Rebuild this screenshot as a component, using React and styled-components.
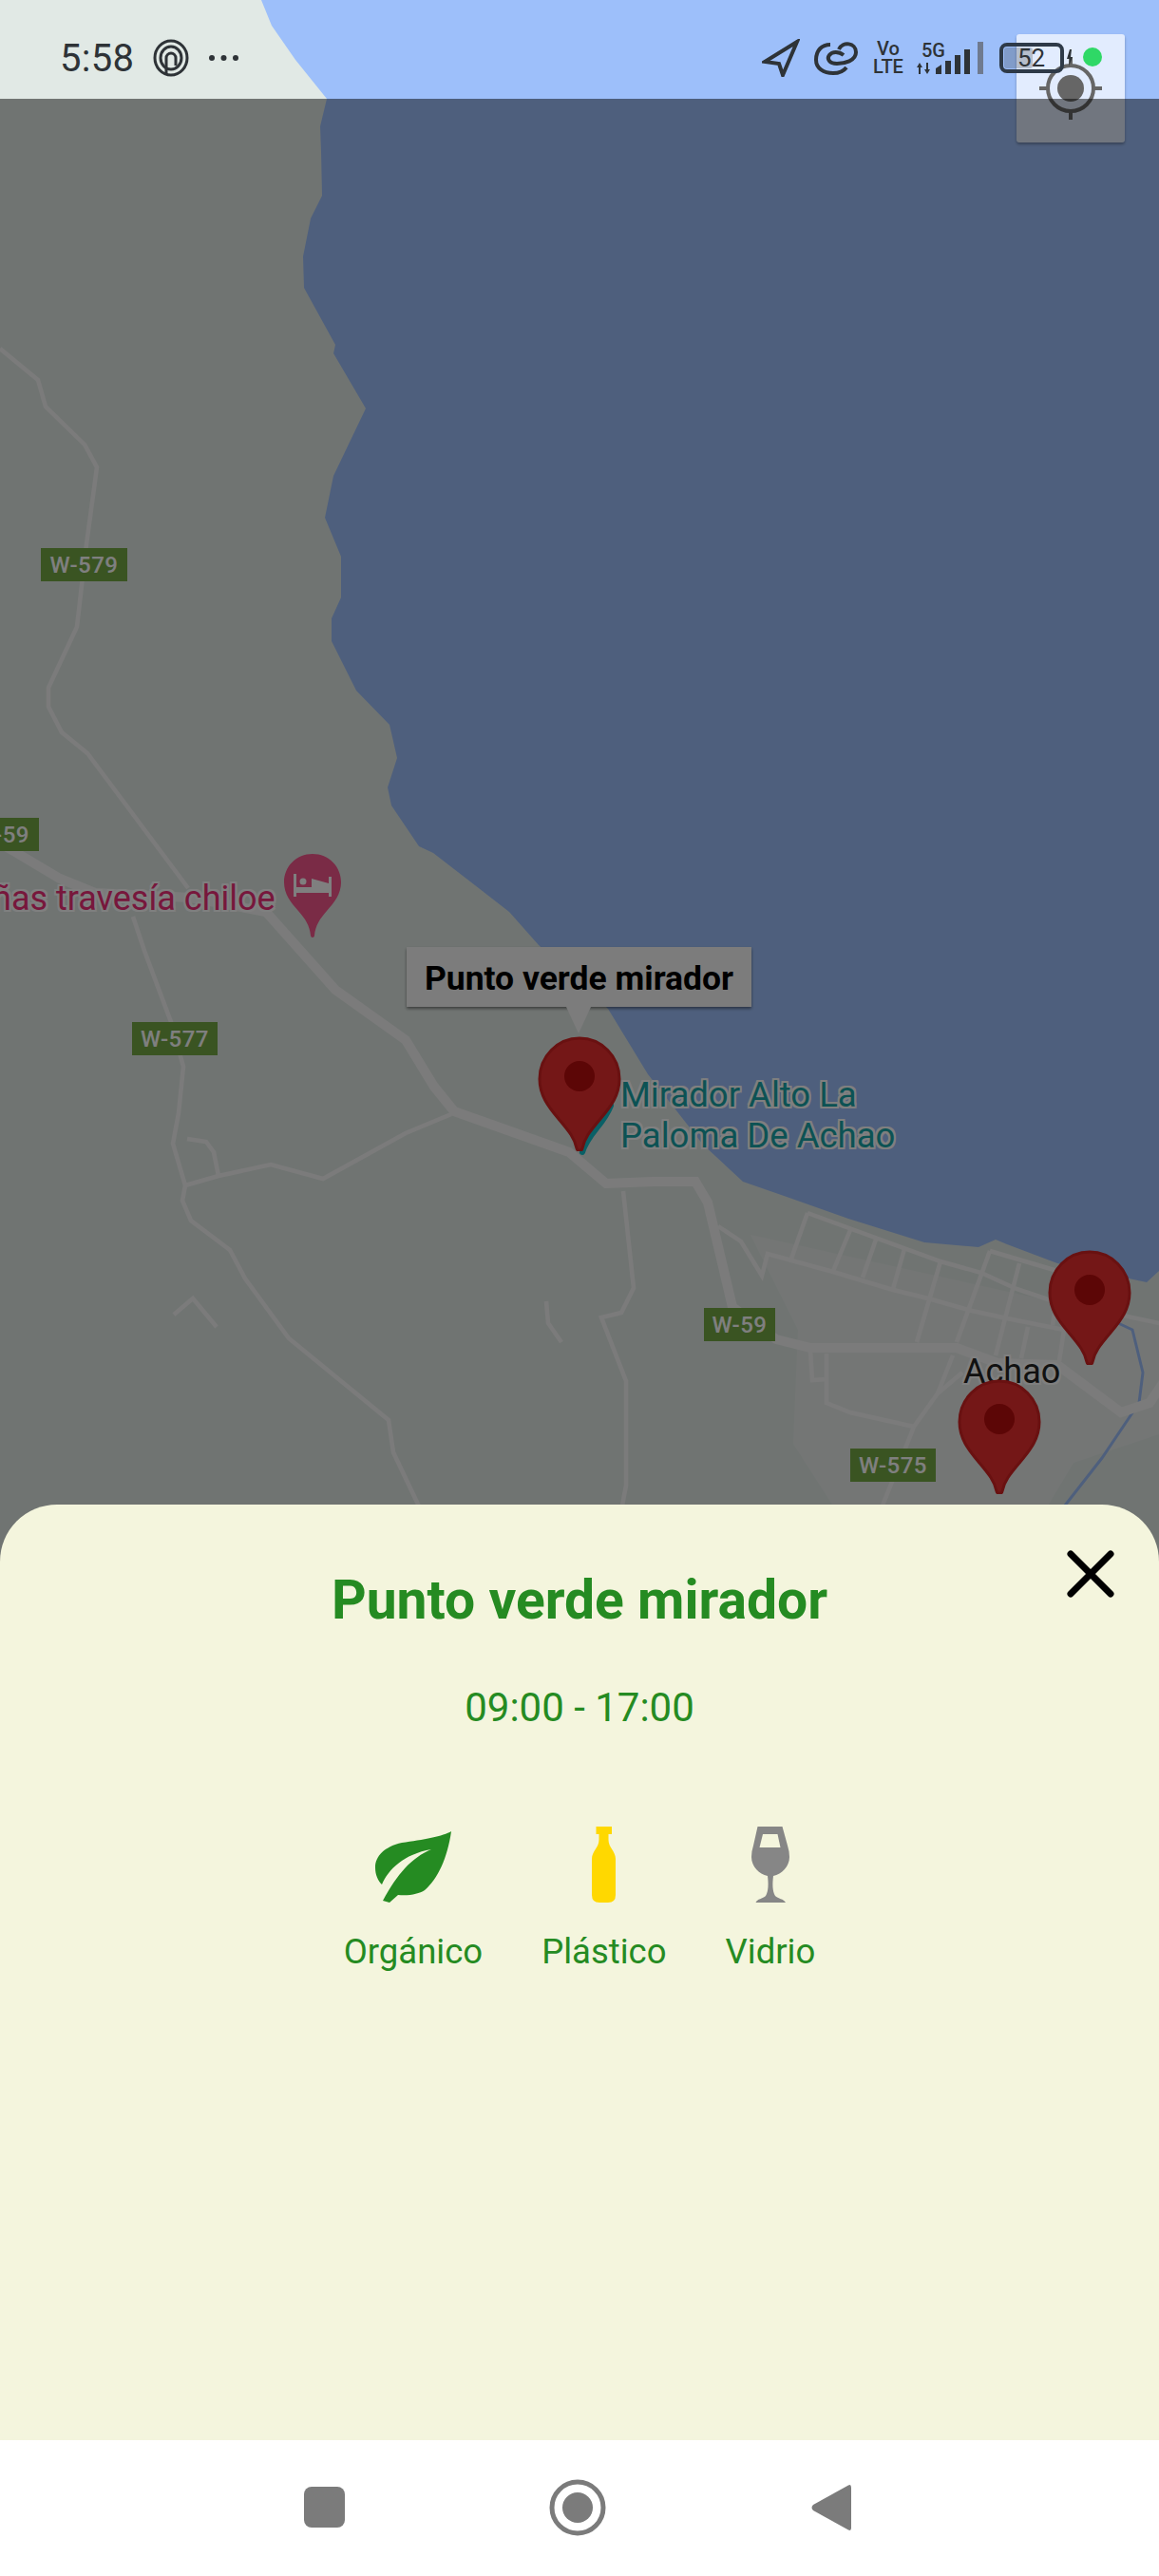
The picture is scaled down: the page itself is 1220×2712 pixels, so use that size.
import React from 'react'
import styled, { createGlobalStyle } from 'styled-components'

const GlobalStyle = createGlobalStyle`
  html, body {
    margin: 0;
    padding: 0;
    background: #fff;
    font-family: Roboto, "Liberation Sans", sans-serif;
  }
`

const Phone = styled.div`
  width: 1220px;
  height: 2712px;
  display: flex;
  flex-direction: column;
  overflow: hidden;
  position: relative;
`

const MapArea = styled.div`
  position: relative;
  height: 1644px;
  margin-bottom: -60px;
  flex: none;
  overflow: hidden;
  background: #e1e9e5;
`

const MapLayer = styled.svg`
  position: absolute;
  left: 0;
  top: 0;
`

const Scrim = styled.div`
  position: absolute;
  left: 0;
  right: 0;
  top: 104px;
  bottom: 0;
  background: rgba(0, 0, 0, 0.5);
`

const RoadSign = styled.span`
  position: absolute;
  left: ${p => p.$x}px;
  top: ${p => p.$y}px;
  width: ${p => p.$w}px;
  height: 35px;
  background: #74a845;
  color: #fff;
  font-size: 24px;
  font-weight: 500;
  letter-spacing: 0.5px;
  white-space: nowrap;
  display: flex;
  align-items: center;
  justify-content: ${p => p.$end ? 'flex-end' : 'center'};
  padding-right: ${p => p.$end ? 10 : 0}px;
  box-sizing: border-box;
  overflow: hidden;
`

const PlaceLabel = styled.span`
  position: absolute;
  left: ${p => p.$x}px;
  top: ${p => p.$y}px;
  color: ${p => p.$color};
  font-size: ${p => p.$size}px;
  line-height: ${p => p.$line}px;
  white-space: pre;
  text-shadow: -2px 0 #fff, 2px 0 #fff, 0 -2px #fff, 0 2px #fff,
    -2px -2px #fff, 2px -2px #fff, -2px 2px #fff, 2px 2px #fff;
`

const PinMark = styled.svg`
  position: absolute;
  left: ${p => p.$x}px;
  top: ${p => p.$y}px;
`

const Tooltip = styled.div`
  position: absolute;
  left: 428px;
  top: 997px;
  width: 363px;
  height: 63px;
  padding-top: 2px;
  box-sizing: border-box;
  background: #f8f8f8;
  box-shadow: 0 2px 3px rgba(0, 0, 0, 0.45);
  color: #000;
  font-size: 35.5px;
  font-weight: 700;
  display: flex;
  align-items: center;
  justify-content: center;
  white-space: nowrap;

  &::after {
    content: '';
    position: absolute;
    left: 168px;
    top: 63px;
    border-left: 13px solid transparent;
    border-right: 13px solid transparent;
    border-top: 28px solid #f8f8f8;
  }
`

const LocateButton = styled.div`
  position: absolute;
  left: 1070px;
  top: 36px;
  width: 114px;
  height: 114px;
  border-radius: 3px;
  background: rgba(255, 255, 255, 0.7);
  box-shadow: 0 2px 3px rgba(0, 0, 0, 0.3);
  display: flex;
  align-items: center;
  justify-content: center;
`

const StatusBar = styled.div`
  position: absolute;
  left: 0;
  right: 0;
  top: 0;
  height: 104px;
  color: #2e3337;
  display: flex;
  align-items: center;
  padding: 18px 91px 0 63px;
  box-sizing: border-box;
`

const Clock = styled.span`
  font-size: 40px;
  margin-right: 20px;
  letter-spacing: 0.3px;
`

const Spacer = styled.div`
  flex: 1;
`

const StatusIcon = styled.svg`
  flex: none;
  margin-left: ${p => p.$gap || 0}px;
`

const NetStack = styled.div`
  margin-left: ${p => p.$gap}px;
  width: ${p => p.$w}px;
  display: flex;
  flex-direction: column;
  align-items: ${p => p.$align};
  font-size: 20px;
  font-weight: 500;
  line-height: 19px;
`

const TransferArrows = styled.svg`
  align-self: flex-start;
  margin-top: 3px;
`

const Battery = styled.div`
  margin-left: 17px;
  width: 68px;
  height: 32px;
  border: 4px solid #2e3a48;
  border-radius: 8px;
  box-sizing: border-box;
  position: relative;
  display: flex;
  align-items: center;
  font-size: 26px;
  padding-left: 15px;

  &::before {
    content: '';
    position: absolute;
    left: 1px;
    top: 1px;
    bottom: 1px;
    width: 30px;
    border-radius: 3px;
    background: rgba(46, 51, 55, 0.25);
  }
`

const GreenDot = styled.span`
  position: absolute;
  left: 1140px;
  top: 50px;
  width: 20px;
  height: 20px;
  border-radius: 50%;
  background: #2fd866;
`

const Sheet = styled.section`
  position: relative;
  flex: none;
  height: 985px;
  background: #f4f5dd;
  border-radius: 60px 60px 0 0;
  display: flex;
  flex-direction: column;
  align-items: center;
  color: #258b22;
`

const CloseButton = styled.svg`
  position: absolute;
  right: 47px;
  top: 48px;
`

const Title = styled.h1`
  margin: 69px 0 0;
  font-size: 57px;
  line-height: 64px;
  font-weight: 700;
`

const Hours = styled.div`
  margin-top: 56px;
  font-size: 42px;
  line-height: 50px;
`

const Categories = styled.div`
  margin-top: 100px;
  display: flex;
  gap: 62px;
`

const Category = styled.div`
  display: flex;
  flex-direction: column;
  align-items: center;
`

const CategoryIcon = styled.svg`
  display: block;
  height: 80px;
`

const CategoryName = styled.span`
  margin-top: 29px;
  font-size: 36.5px;
  line-height: 46px;
`

const NavBar = styled.nav`
  flex: none;
  height: 143px;
  background: #fff;
  display: flex;
  align-items: center;
  padding: 0 0 2px 320px;
  box-sizing: border-box;
`

const RecentsKey = styled.span`
  width: 43px;
  height: 43px;
  border-radius: 8px;
  background: #7b7b7b;
`

const HomeKey = styled.svg`
  margin-left: 215px;
`

const BackKey = styled.svg`
  margin-left: 216px;
`

const road = '#f7f7f7'
const water = '#9dbffa'

const coast = [
  '275,0 286,27 311,63 344,104 337,133 338,160 339,206 327,230 319,270 320,303 353,363 351,372 385,430',
  '351,501 342,545 359,586 359,629 349,651 349,675 375,727 410,763 418,798 408,829 412,848 441,891 456,898',
  '536,960 567,995 640,1062 682,1131 740,1205 782,1244 828,1260 893,1283 973,1308 1030,1313 1048,1305 1060,1310',
  '1113,1330 1207,1350 1220,1338 1220,0'
].join(' ')

const majorRoads = [
  '-10,882 16,897 63,925 100,940 200,945 280,960 353,1042 427,1095 457,1144 478,1170 599,1213 638,1246 688,1244 732,1244 745,1266 771,1376 817,1410 853,1419 1007,1419 1050,1435 1113,1437 1180,1487 1210,1477 1225,1455'
]

const minorRoads = [
  '0,367 40,400 48,428 89,468 102,492 91,573 81,660 51,724 51,744 65,771 92,793 198,935',
  '140,965 152,1001 180,1076 193,1123 188,1172 182,1204 195,1248 192,1264 201,1285 242,1316 258,1346 304,1409 409,1495 414,1529 443,1590',
  '195,1248 230,1238 285,1226 340,1241 427,1193 475,1173',
  '197,1199 217,1202 225,1213 230,1238',
  '183,1384 203,1367 228,1397',
  '656,1254 667,1356 654,1382 633,1387 659,1454 659,1564 654,1590',
  '575,1370 577,1393 591,1413',
  '756,1291 780,1307 802,1343 808,1320 877,1339 940,1358 977,1367 1023,1380 1060,1388 1120,1400 1115,1433',
  '850,1277 990,1328 1033,1340 1070,1357 1103,1368 1225,1394',
  '1042,1317 1113,1338',
  '850,1277 833,1325',
  '895,1295 877,1338',
  '922,1305 908,1345',
  '952,1315 940,1357',
  '990,1328 965,1413',
  '1042,1317 1007,1413',
  '1073,1330 1048,1427',
  '1082,1397 1075,1430',
  '1108,1395 1110,1383',
  '853,1423 855,1453 870,1452',
  '870,1425 870,1477 895,1487 962,1502',
  '962,1502 987,1467 1003,1427',
  '987,1467 1013,1445',
  '962,1502 927,1590'
]

const signs = [
  { label: 'W-579', x: 43, y: 577, w: 91 },
  { label: 'W-59', x: -4, y: 861, w: 45, end: true },
  { label: 'W-577', x: 139, y: 1076, w: 90 },
  { label: 'W-59', x: 741, y: 1377, w: 75 },
  { label: 'W-575', x: 895, y: 1525, w: 90 }
]

const pins = [
  { x: 566, y: 1091 },
  { x: 1103, y: 1316 },
  { x: 1008, y: 1452 }
]

const Pin = ({ x, y }) => (
  <PinMark $x={x} $y={y} width="88" height="121" viewBox="0 0 88 121">
    <path d="M44 2C21 2 2 21 2 45c0 17 9 29 20 42 10 12 17 20 19 31 .5 3 5.5 3 6 0 2-11 9-19 19-31 11-13 20-25 20-42C86 21 67 2 44 2Z" fill="#e82e2e" stroke="#d22222" strokeWidth="3" />
    <circle cx="44" cy="42" r="16" fill="#b80c0c" />
  </PinMark>
)

const categories = [
  {
    name: 'Orgánico',
    width: 80,
    viewBox: '0 0 80 80',
    color: '#258b22',
    d: 'M80 5C72 10 50 14 28 17 10 21 0 31 0 43c0 8 3 14 7 18C14 45 30 29 59 24 38 33 24 49 8 78l7 2 9-8c12 1 22-1 28-5C66 55 76 33 80 5Z'
  },
  {
    name: 'Plástico',
    width: 25,
    viewBox: '0 0 25 80',
    color: '#ffd800',
    d: 'M4.5 0H21V8H17.5V14C17.5 22 25 26 25 34V72Q25 80 17 80H8Q0 80 0 72V34C0 26 7.5 22 7.5 14V8H4.5Z'
  },
  {
    name: 'Vidrio',
    width: 40,
    viewBox: '0 0 40 80',
    color: '#868686',
    d: 'M6.5 0H32.5L38 20Q40 26 40 32C40 42 32 50 23 52 22 60 22 68 25 73 28 76 34 76 36 80H4.5C6 76 12 76 15 73 18 68 18 60 17 52 8 50 0 42 0 32Q0 26 2 20ZM12 8 8.5 22H30.5L27.5 8Z'
  }
]

export default function App() {
  return (
    <Phone>
      <GlobalStyle />
      <MapArea>
        <MapLayer width="1220" height="1644" viewBox="0 0 1220 1644">
          <polygon points="790,1300 1220,1395 1220,1510 1130,1540 1100,1590 880,1590 835,1520 840,1400" fill="#e9edeb" />
          <polygon points={coast} fill={water} />
          <polyline points="1177,1393 1192,1400 1203,1445 1199,1477 1160,1535 1117,1590" fill="none" stroke={water} strokeWidth="3" />
          {minorRoads.map(points => (
            <polyline key={points} points={points} fill="none" stroke={road} strokeWidth="4.5" />
          ))}
          {majorRoads.map(points => (
            <polyline key={points} points={points} fill="none" stroke={road} strokeWidth="10" />
          ))}
          <path d="M643 1164C634 1186 620 1192 613 1213" fill="none" stroke="#14c0cc" strokeWidth="6" strokeLinecap="round" />
        </MapLayer>

        {signs.map(sign => (
          <RoadSign key={sign.x} $x={sign.x} $y={sign.y} $w={sign.w} $end={sign.end}>{sign.label}</RoadSign>
        ))}

        <PlaceLabel $x={-8} $y={925} $color="#ee2f78" $size={36} $line={42}>ñas travesía chiloe</PlaceLabel>
        <PlaceLabel $x={653} $y={1131} $color="#18a5a8" $size={36.5} $line={43}>{'Mirador Alto La\nPaloma De Achao'}</PlaceLabel>
        <PlaceLabel $x={1014} $y={1423} $color="#222" $size={36} $line={42}>Achao</PlaceLabel>

        <PinMark $x={299} $y={899} width="60" height="88" viewBox="0 0 60 88">
          <path d="M30 0C13 0 0 13 0 30c0 12 7 21 15 30 7 8 12 15 13 26 .2 2.500 3.800 2.500 4 0 1-11 6-18 13-26 8-9 15-18 15-30C60 13 47 0 30 0Z" fill="#f5568c" />
          <path d="M10 21h3v14h16v-9l18 5v-7h3v21h-3v-4H13v4h-3Z" fill="#fff" />
          <circle cx="20" cy="29" r="3.500" fill="#fff" />
        </PinMark>

        {pins.map(pin => <Pin key={pin.x} x={pin.x} y={pin.y} />)}

        <Tooltip>Punto verde mirador</Tooltip>

        <LocateButton>
          <svg width="66" height="66" viewBox="0 0 66 66" fill="none" stroke="#666" strokeWidth="4">
            <circle cx="33" cy="33" r="24" />
            <circle cx="33" cy="33" r="14" fill="#666" stroke="none" />
            <path d="M33 0v9M33 57v9M0 33h9M57 33h9" />
          </svg>
        </LocateButton>

        <Scrim />

        <StatusBar>
          <Clock>5:58</Clock>
          <StatusIcon width="38" height="40" viewBox="0 0 38 40" fill="none" stroke="#2e3337" strokeWidth="3">
            <ellipse cx="19" cy="20" rx="17" ry="18" />
            <ellipse cx="19" cy="20" rx="11" ry="12" />
            <path d="M14 38V20a5 5 0 0 1 10 0v8" />
          </StatusIcon>
          <StatusIcon $gap={20} width="33" height="8" viewBox="0 0 33 8" fill="#2e3337">
            <circle cx="4" cy="4" r="3" />
            <circle cx="16.500" cy="4" r="3" />
            <circle cx="29" cy="4" r="3" />
          </StatusIcon>
          <Spacer />
          <StatusIcon width="40" height="40" viewBox="0 0 40 40" fill="none" stroke="#2e3337" strokeWidth="4" strokeLinejoin="miter">
            <path d="M37 3 3 24l15 2 4 12Z" />
          </StatusIcon>
          <StatusIcon $gap={15} width="46" height="36" viewBox="0 0 46 36" fill="none" stroke="#2e3337" strokeWidth="4">
            <path d="M26 9C30 0 44 2 44 12c0 9-12 12-20 12-8 0-11-5-8-9 3-4 10-4 15 0" />
            <path d="M17 4C8 4 2 10 2 20c0 9 8 14 18 14 6 0 11-2 14-6" />
          </StatusIcon>
          <NetStack $gap={15} $w={34} $align="center">
            <span>Vo</span>
            <span>LTE</span>
          </NetStack>
          <NetStack $gap={12} $w={31} $align="flex-end">
            <span>5G</span>
            <TransferArrows width="16" height="12" viewBox="0 0 16 12" fill="#2e3337">
              <path d="M4 0 7 5H5V12H3V5H1ZM12 12 9 7H11V0H13V7H15Z" />
            </TransferArrows>
          </NetStack>
          <StatusIcon $gap={-10} width="50" height="34" viewBox="0 0 50 34" fill="#2e3337">
            <path d="M0 34V28L6 24V34ZM10 34V20H16V34ZM20 34V14H26V34ZM30 34V8H36V34Z" />
            <path d="M44 34V0H50V34Z" fill="#6f7a8f" />
          </StatusIcon>
          <Battery>52</Battery>
          <StatusIcon $gap={3} width="6" height="18" viewBox="0 0 6 18" fill="#2e3337">
            <path d="M3 0H5L4 8H6L2 18 3 10H0Z" />
          </StatusIcon>
        </StatusBar>
        <GreenDot />
      </MapArea>

      <Sheet>
        <CloseButton width="50" height="50" viewBox="0 0 50 50" stroke="#000" strokeWidth="7" strokeLinecap="round">
          <path d="M4 4 46 46M46 4 4 46" />
        </CloseButton>
        <Title>Punto verde mirador</Title>
        <Hours>09:00 - 17:00</Hours>
        <Categories>
          {categories.map(cat => (
            <Category key={cat.name}>
              <CategoryIcon width={cat.width} height="80" viewBox={cat.viewBox}>
                <path d={cat.d} fill={cat.color} fillRule="evenodd" />
              </CategoryIcon>
              <CategoryName>{cat.name}</CategoryName>
            </Category>
          ))}
        </Categories>
      </Sheet>

      <NavBar>
        <RecentsKey />
        <HomeKey width="60" height="60" viewBox="0 0 60 60">
          <circle cx="30" cy="30" r="27" fill="none" stroke="#7b7b7b" strokeWidth="5" />
          <circle cx="30" cy="30" r="16" fill="#7b7b7b" />
        </HomeKey>
        <BackKey width="42" height="50" viewBox="0 0 42 50">
          <path d="M39 1.500 2 22q-3 3 0 6l37 20.500q3 1.500 3-2V4q0-4-3-2.500Z" fill="#7b7b7b" />
        </BackKey>
      </NavBar>
    </Phone>
  )
}
